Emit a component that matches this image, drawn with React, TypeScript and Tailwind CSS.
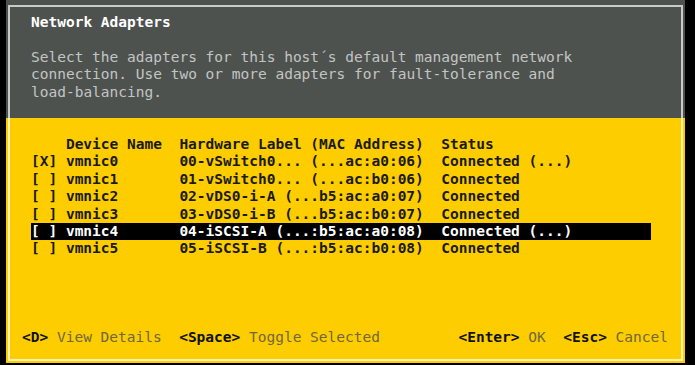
import { clsx } from 'clsx';

const ROWS = [
  { on: true, dev: 'vmnic0', hw: '00-vSwitch0... (...ac:a0:06)', status: 'Connected (...)' },
  { on: false, dev: 'vmnic1', hw: '01-vSwitch0... (...ac:b0:06)', status: 'Connected' },
  { on: false, dev: 'vmnic2', hw: '02-vDS0-i-A (...b5:ac:a0:07)', status: 'Connected' },
  { on: false, dev: 'vmnic3', hw: '03-vDS0-i-B (...b5:ac:b0:07)', status: 'Connected' },
  { on: false, dev: 'vmnic4', hw: '04-iSCSI-A (...:b5:ac:a0:08)', status: 'Connected (...)', sel: true },
  { on: false, dev: 'vmnic5', hw: '05-iSCSI-B (...:b5:ac:b0:08)', status: 'Connected' },
];

function Row({ a, b, c, d, sel }: { a: string; b: string; c: string; d: string; sel?: boolean }) {
  return (
    <div
      className={clsx(
        'flex h-[17.4px] w-[71ch] whitespace-pre font-bold',
        sel ? 'bg-black text-white' : 'text-[#1a1a14]',
      )}
    >
      <span className="w-[4ch] shrink-0">{a}</span>
      <span className="w-[13ch] shrink-0">{b}</span>
      <span className="w-[30ch] shrink-0">{c}</span>
      <span>{d}</span>
    </div>
  );
}

function Key({ k, label }: { k: string; label: string }) {
  return (
    <span className="whitespace-pre">
      <span className="font-bold text-[#111]">{k}</span>
      <span className="text-[#70673e]"> {label}</span>
    </span>
  );
}

export default function App() {
  return (
    <div
      className="flex h-[365px] w-[695px] flex-col bg-black pb-[2px] pl-[6px] pr-[10px] text-[14.5px] leading-[17.4px]"
      style={{ fontFamily: '"DejaVu Sans Mono", "Liberation Mono", monospace' }}
    >
      {/* ---- cabeçalho cinzento ---- */}
      <div className="h-[118px] shrink-0 bg-[#4e524f] px-[2px] pt-[5px]">
        <div className="h-full border-x-2 border-t-2 border-[#c9cbc9] pl-[21px] pt-[7px]">
          <p className="font-bold text-white">Network Adapters</p>
          <p className="mt-[17.4px] whitespace-pre text-[#c3c5c3]">
            {'Select the adapters for this host\u00b4s default management network\nconnection. Use two or more adapters for fault-tolerance and\nload-balancing.'}
          </p>
        </div>
      </div>

      {/* ---- lista amarela ---- */}
      <div className="flex-1 bg-[#fdcd00] px-[2px] pb-[2px]">
        <div className="flex h-full flex-col border-x-2 border-b-2 border-[#fff3b8] pb-[13px]">
          <div className="pl-[21px] pt-[18px]">
            <Row a="" b="Device Name" c="Hardware Label (MAC Address)" d="Status" />
            {ROWS.map((r) => (
              <Row key={r.dev} a={r.on ? '[X]' : '[ ]'} b={r.dev} c={r.hw} d={r.status} sel={r.sel} />
            ))}
          </div>
          <div className="mt-auto flex justify-between pl-[12px] pr-[13px]">
            <div className="flex gap-[2ch]">
              <Key k="<D>" label="View Details" />
              <Key k="<Space>" label="Toggle Selected" />
            </div>
            <div className="flex gap-[2ch]">
              <Key k="<Enter>" label="OK" />
              <Key k="<Esc>" label="Cancel" />
            </div>
          </div>
        </div>
      </div>
    </div>
  );
}
